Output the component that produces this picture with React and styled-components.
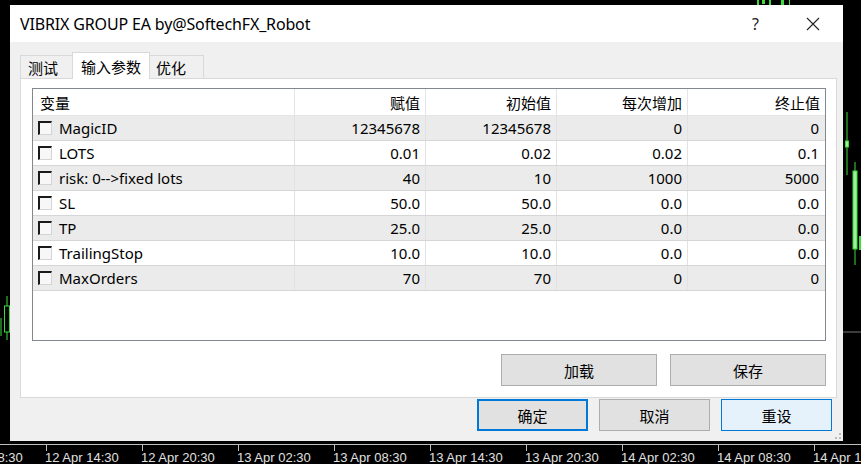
import styled, { createGlobalStyle } from "styled-components";

const GlobalStyle = createGlobalStyle`
    html, body {
        margin: 0;
        padding: 0;
        background: #000;
    }
    body {
        width: 861px;
        height: 464px;
        overflow: hidden;
        font-family: "Noto Sans", "Noto Sans CJK SC", sans-serif;
    }
`

const params = [
    { name: "MagicID", value: "12345678", start: "12345678", step: "0", stop: "0" },
    { name: "LOTS", value: "0.01", start: "0.02", step: "0.02", stop: "0.1" },
    { name: "risk: 0-->fixed lots", value: "40", start: "10", step: "1000", stop: "5000" },
    { name: "SL", value: "50.0", start: "50.0", step: "0.0", stop: "0.0" },
    { name: "TP", value: "25.0", start: "25.0", step: "0.0", stop: "0.0" },
    { name: "TrailingStop", value: "10.0", start: "10.0", step: "0.0", stop: "0.0" },
    { name: "MaxOrders", value: "70", start: "70", step: "0", stop: "0" },
]

const axisLabels = [
    "12 Apr 08:30", "12 Apr 14:30", "12 Apr 20:30", "13 Apr 02:30", "13 Apr 08:30",
    "13 Apr 14:30", "13 Apr 20:30", "14 Apr 02:30", "14 Apr 08:30", "14 Apr 14:30",
]

// candles peeking out around the dialog
function Candles() {
    const g = "#3ddc3d"
    return (
        <ChartSvg width="861" height="444" viewBox="0 0 861 444">
            <line x1="7" y1="296" x2="7" y2="340" stroke={g} strokeWidth="1" />
            <rect x="4.5" y="306" width="5" height="26" fill="#000" stroke={g} />
            <line x1="1" y1="318" x2="1" y2="336" stroke={g} />
            <line x1="847" y1="112" x2="847" y2="175" stroke={g} />
            <rect x="845.5" y="141" width="3" height="6" fill="#9ef09e" stroke={g} />
            <line x1="855" y1="162" x2="855" y2="265" stroke={g} />
            <rect x="853" y="171" width="4" height="78" fill="#9ef09e" stroke={g} />
            <rect x="859" y="236" width="3" height="14" fill={g} />
            <line x1="843" y1="332" x2="861" y2="332" stroke="#777" />
            <rect x="757" y="0" width="2" height="5" fill={g} />
            <rect x="762" y="0" width="3" height="4" fill={g} />
            <rect x="769" y="0" width="2" height="5" fill={g} />
            <rect x="781" y="0" width="3" height="5" fill={g} />
            <rect x="789" y="0" width="1" height="5" fill={g} />
        </ChartSvg>
    )
}

function Checkbox() {
    return <StCheck />
}

function App() {
    return (
        <>
            <GlobalStyle />
            <StChart>
                <Candles />
                <StDialog>
                    <StTitleBar>
                        <StTitle>VIBRIX GROUP EA by@SoftechFX_Robot</StTitle>
                        <StTitleBtn>?</StTitleBtn>
                        <StTitleBtn>
                            <svg width="14" height="14" viewBox="0 0 14 14">
                                <path d="M1 1 L13 13 M13 1 L1 13" stroke="#222" strokeWidth="1.1" />
                            </svg>
                        </StTitleBtn>
                    </StTitleBar>
                    <StBody>
                        <StTabs>
                            <StTab>测试</StTab>
                            <StTab active>输入参数</StTab>
                            <StTab>优化</StTab>
                        </StTabs>
                        <StPanel>
                            <StTable>
                                <StHeadRow>
                                    <StHeadCell>变量</StHeadCell>
                                    <StHeadCell right>赋值</StHeadCell>
                                    <StHeadCell right>初始值</StHeadCell>
                                    <StHeadCell right>每次增加</StHeadCell>
                                    <StHeadCell right last>终止值</StHeadCell>
                                </StHeadRow>
                                {
                                    params.map((p, i) => {
                                        return (
                                            <StRow key={p.name} shaded={i % 2 === 0}>
                                                <StNameCell>
                                                    <Checkbox />
                                                    {p.name}
                                                </StNameCell>
                                                <StCell>{p.value}</StCell>
                                                <StCell>{p.start}</StCell>
                                                <StCell>{p.step}</StCell>
                                                <StCell last>{p.stop}</StCell>
                                            </StRow>
                                        )
                                    })
                                }
                            </StTable>
                            <StPanelButtons>
                                <StButton wide>加载</StButton>
                                <StButton wide>保存</StButton>
                            </StPanelButtons>
                        </StPanel>
                        <StFooter>
                            <StButton variant="default">确定</StButton>
                            <StButton>取消</StButton>
                            <StButton variant="hover">重设</StButton>
                        </StFooter>
                        <StGrip>
                            <svg width="8" height="8" viewBox="0 0 8 8">
                                <rect x="5" y="1" width="2" height="2" fill="#bbb" />
                                <rect x="1" y="5" width="2" height="2" fill="#bbb" />
                                <rect x="5" y="5" width="2" height="2" fill="#bbb" />
                            </svg>
                        </StGrip>
                    </StBody>
                </StDialog>
            </StChart>
            <StAxis>
                {
                    axisLabels.map((label, i) => {
                        return (
                            <StAxisLabel key={label} first={i === 0}>{label}</StAxisLabel>
                        )
                    })
                }
            </StAxis>
        </>
    )
}

export default App;

const StChart = styled.div`
    position: relative;
    width: 861px;
    height: 444px;
    background: #000;
`
const ChartSvg = styled.svg`
    position: absolute;
    left: 0;
    top: 0;
`
const StDialog = styled.div`
    position: absolute;
    left: 10px;
    top: 5px;
    width: 833px;
    height: 436px;
    display: flex;
    flex-direction: column;
    background: #f0f0f0;
`
const StTitleBar = styled.div`
    height: 37px;
    flex-shrink: 0;
    display: flex;
    align-items: center;
    background: #fff;
    padding-left: 10px;
`
const StTitle = styled.div`
    flex: 1;
    font-size: 16px;
    color: #000;
    letter-spacing: -0.15px;
`
const StTitleBtn = styled.div`
    width: 57px;
    height: 37px;
    display: flex;
    align-items: center;
    justify-content: center;
    font-size: 16px;
    color: #222;
    &:last-child {
        width: 57px;
        margin-right: 2px;
    }
`
const StBody = styled.div`
    position: relative;
    flex: 1;
    display: flex;
    flex-direction: column;
    padding: 10px 11px 0 10px;
`
const StTabs = styled.div`
    display: flex;
    align-items: flex-end;
    height: 27px;
    padding-left: 0;
`
const StTab = styled.div`
    height: ${(p) => (p.active ? "27px" : "24px")};
    box-sizing: border-box;
    padding: 0 ${(p) => (p.active ? "8px" : "6px")};
    display: flex;
    align-items: center;
    font-size: 15px;
    color: #000;
    background: ${(p) => (p.active ? "#fff" : "#f0f0f0")};
    border: 1px solid #d9d9d9;
    border-bottom: ${(p) => (p.active ? "none" : "1px solid #d9d9d9")};
    margin-left: ${(p) => (p.active ? "-1px" : "0")};
    margin-right: ${(p) => (p.active ? "-1px" : "0")};
    position: relative;
    z-index: ${(p) => (p.active ? 1 : 0)};
    &:first-child {
        padding: 0 14px 0 7px;
    }
    &:last-child {
        padding: 0 17px 0 6px;
    }
`
const StPanel = styled.div`
    width: 817px;
    height: 320px;
    box-sizing: border-box;
    margin-top: -1px;
    background: #fff;
    border: 1px solid #d9d9d9;
    padding: 9px 10px 0 11px;
    display: flex;
    flex-direction: column;
`
const StTable = styled.div`
    height: 253px;
    box-sizing: border-box;
    border: 1px solid #828790;
    background: #fff;
`
const StHeadRow = styled.div`
    display: grid;
    grid-template-columns: 262px 131px 131px 131px 1fr;
    height: 27px;
    box-sizing: border-box;
    border-bottom: 1px solid #e5e5e5;
`
const StHeadCell = styled.div`
    display: flex;
    align-items: center;
    justify-content: ${(p) => (p.right ? "flex-end" : "flex-start")};
    padding: 0 ${(p) => (p.right ? "5px" : "0")} 0 ${(p) => (p.right ? "0" : "7px")};
    font-size: 15px;
    color: #000;
    border-right: ${(p) => (p.last ? "none" : "1px solid #e5e5e5")};
`
const StRow = styled.div`
    display: grid;
    grid-template-columns: 262px 131px 131px 131px 1fr;
    height: 25px;
    box-sizing: border-box;
    background: ${(p) => (p.shaded ? "#ebebeb" : "#fff")};
    border-bottom: 1px solid #d6d6d6;
`
const StCell = styled.div`
    display: flex;
    align-items: center;
    justify-content: flex-end;
    padding-right: ${(p) => (p.last ? "6px" : "5px")};
    font-size: 15px;
    color: #000;
    border-right: ${(p) => (p.last ? "none" : "1px solid #e2e2e2")};
`
const StNameCell = styled.div`
    display: flex;
    align-items: center;
    gap: 7px;
    padding-left: 5px;
    font-size: 15px;
    color: #000;
    border-right: 1px solid #e2e2e2;
`
const StCheck = styled.span`
    width: 14px;
    height: 14px;
    box-sizing: border-box;
    background: #f7f7f7;
    border-top: 2px solid #1a1a1a;
    border-left: 2px solid #1a1a1a;
    border-right: 1px solid #d4d4d4;
    border-bottom: 1px solid #d4d4d4;
`
const StPanelButtons = styled.div`
    display: flex;
    justify-content: flex-end;
    gap: 13px;
    margin-top: 13px;
`
const StButton = styled.div`
    width: ${(p) => (p.wide ? "156px" : "111px")};
    height: 32px;
    box-sizing: border-box;
    display: flex;
    align-items: center;
    justify-content: center;
    font-size: 15px;
    color: #000;
    background: ${(p) => (p.variant === "hover" ? "#e5f1fb" : "#e1e1e1")};
    border: ${(p) =>
        p.variant === "default"
            ? "2px solid #0078d7"
            : p.variant === "hover"
            ? "1px solid #0078d7"
            : "1px solid #adadad"};
`
const StFooter = styled.div`
    display: flex;
    justify-content: flex-end;
    gap: 11px;
    margin-top: 1px;
`
const StGrip = styled.div`
    position: absolute;
    right: 1px;
    bottom: 1px;
    width: 8px;
    height: 8px;
    display: flex;
`
const StAxis = styled.div`
    height: 20px;
    box-sizing: border-box;
    border-top: 1px solid #bdbdbd;
    display: flex;
    padding-left: 46px;
    position: relative;
    overflow: hidden;
`
const StAxisLabel = styled.div`
    flex-shrink: 0;
    width: 96px;
    box-sizing: border-box;
    margin-left: ${(p) => (p.first ? "-96px" : "0")};
    border-left: 1px solid #bdbdbd;
    height: 4px;
    position: relative;
    font-family: "Liberation Sans", sans-serif;
    font-size: 13px;
    color: #e0e0e0;
    white-space: nowrap;
    line-height: 1;
    padding-top: 6px;
    text-indent: -2px;
`
